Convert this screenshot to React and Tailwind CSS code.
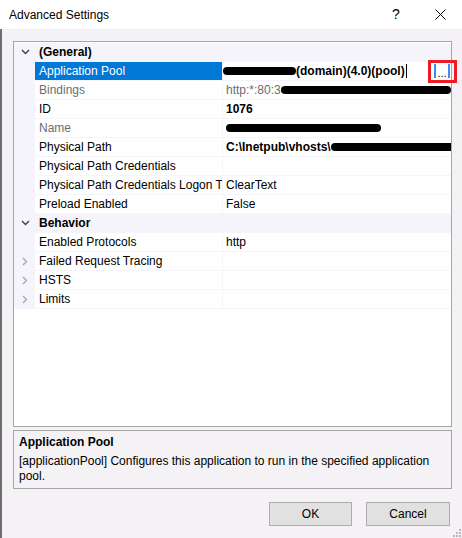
import React from 'react';

const Blob = ({ w, className = '' }) => (
  <span className={`inline-block h-[8px] bg-black rounded-full shrink-0 ${className}`} style={{ width: w }} />
);

const ChevronDown = () => (
  <svg width="9" height="6" viewBox="0 0 9 6" className="block">
    <path d="M1 1 L4.5 4.5 L8 1" fill="none" stroke="#404040" strokeWidth="1.4" />
  </svg>
);

const ChevronRight = () => (
  <svg width="6" height="9" viewBox="0 0 6 9" className="block">
    <path d="M1 1 L4.5 4.5 L1 8" fill="none" stroke="#a8a8a8" strokeWidth="1.4" />
  </svg>
);

const Category = ({ title }) => (
  <div className="flex h-[19px] pb-[1px] bg-[#f4f4fa] items-center">
    <div className="w-[21px] flex justify-center pl-[2px]">
      <ChevronDown />
    </div>
    <div className="pl-[4px] font-bold">{title}</div>
  </div>
);

const Row = ({ label, children, selected, dim, expand }) => (
  <div className="flex h-[19px] pb-[1px] bg-[#f4f4fa]">
    <div className="w-[21px] flex items-center justify-center pl-[1px]">
      {expand && <ChevronRight />}
    </div>
    <div
      className={`w-[187px] pl-[4px] flex items-center whitespace-nowrap overflow-hidden ${
        selected ? 'bg-[#0078d7] text-white' : dim ? 'bg-white text-[#6d6d6d]' : 'bg-white'
      }`}
    >
      {label}
    </div>
    <div className="w-[1px]" />
    <div className="flex-1 bg-white pl-[3px] flex items-center whitespace-nowrap overflow-hidden">
      {children}
    </div>
  </div>
);

export default function App() {
  return (
    <div
      className="relative w-[462px] h-[538px] flex flex-col text-[12px] text-black overflow-hidden"
      style={{ fontFamily: '"Liberation Sans", Arial, sans-serif' }}
    >
      {/* title bar */}
      <div className="h-[29px] bg-white flex items-center pl-[9px] shrink-0">
        <span className="text-[12px]">Advanced Settings</span>
        <div className="flex-1" />
        <span className="w-[44px] text-center text-[14px]">?</span>
        <span className="w-[44px] flex justify-center">
          <svg width="11" height="11" viewBox="0 0 11 11">
            <path d="M0.5 0.5 L10.5 10.5 M10.5 0.5 L0.5 10.5" stroke="#000" strokeWidth="1" />
          </svg>
        </span>
      </div>

      {/* body */}
      <div className="flex-1 bg-[#f5f2f5] border-l-2 border-[#6f6f6f] pl-[11px] pt-[12px] relative">
        {/* property grid */}
        <div className="w-[439px] h-[386px] border border-[#a6a6a6] bg-white pt-[1px]">
          <Category title="(General)" />
          <Row label="Application Pool" selected>
            <Blob w={73} className="-ml-[3px]" />
            <span className="font-bold">(domain)(4.0)(pool)</span>
            <span className="inline-block w-[1px] h-[14px] bg-black ml-[1px]" />
            <div className="flex-1" />
            <span className="h-[14px] w-[16px] mr-[1px] border-x-2 border-[#3d8ee8] flex items-end justify-center leading-[10px] text-[11px]">
              ...
            </span>
          </Row>
          <Row label="Bindings" dim>
            <span className="text-[#6d6d6d]">http:*:80:3</span>
            <Blob w={170} />
          </Row>
          <Row label="ID">
            <span className="font-bold">1076</span>
          </Row>
          <Row label="Name" dim>
            <Blob w={155} />
          </Row>
          <Row label="Physical Path">
            <span className="font-bold">C:\Inetpub\vhosts\</span>
            <Blob w={125} />
          </Row>
          <Row label="Physical Path Credentials" />
          <Row label="Physical Path Credentials Logon Type">ClearText</Row>
          <Row label="Preload Enabled">False</Row>
          <Category title="Behavior" />
          <Row label="Enabled Protocols">http</Row>
          <Row label="Failed Request Tracing" expand />
          <Row label="HSTS" expand />
          <Row label="Limits" expand />
        </div>

        {/* description */}
        <div className="w-[439px] h-[59px] mt-[3px] border border-[#a6a6a6] pl-[5px] pt-[4px] leading-[15px]">
          <div className="font-bold">Application Pool</div>
          <div className="whitespace-nowrap mt-[4px]">
            [applicationPool] Configures this application to run in the specified application
            <br />
            pool.
          </div>
        </div>

        {/* buttons */}
        <div className="flex justify-end gap-[14px] pr-[12px] mt-[13px]">
          <button className="w-[83px] h-[24px] bg-[#e1e1e1] border border-[#adadad]">OK</button>
          <button className="w-[84px] h-[24px] bg-[#e1e1e1] border border-[#adadad]">Cancel</button>
        </div>

        {/* size grip */}
        <svg width="8" height="8" viewBox="0 0 8 8" className="absolute right-[1px] bottom-[1px]">
          {[[6, 0], [6, 3], [3, 3], [6, 6], [3, 6], [0, 6]].map(([x, y], i) => (
            <rect key={i} x={x} y={y} width="2" height="2" fill="#b8b8b8" />
          ))}
        </svg>
      </div>

      {/* red highlight annotation */}
      <div className="absolute left-[428px] top-[60px] w-[29px] h-[23px] border-[3px] border-[#ed1c24]" />
    </div>
  );
}
